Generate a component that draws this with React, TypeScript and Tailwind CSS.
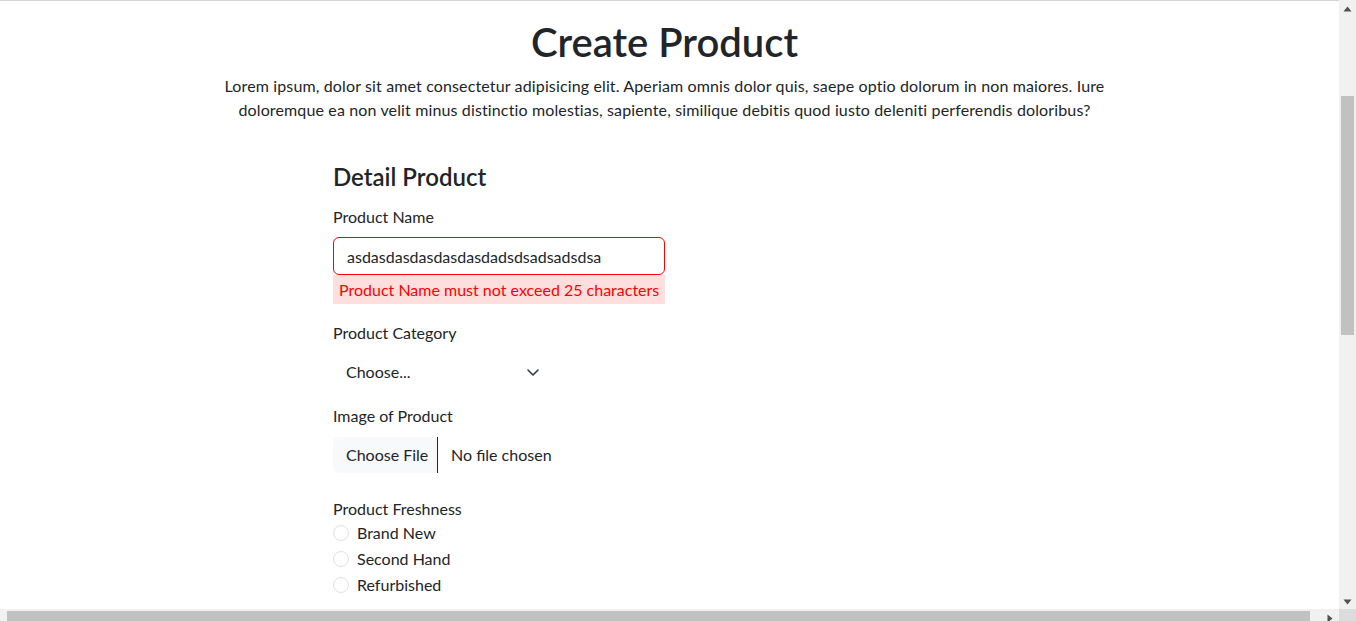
import React from 'react';

const freshness = ['Brand New', 'Second Hand', 'Refurbished'];

function Radio({ label }: { label: string }) {
  return (
    <label className="flex items-center h-[24px] mb-[2px]">
      <span className="w-[16px] h-[16px] rounded-full border border-[#dee2e6] bg-white" />
      <span className="ml-[8px]">{label}</span>
    </label>
  );
}

function Scrollbars() {
  return (
    <>
      {/* vertical */}
      <div className="absolute top-0 right-0 w-[17px] h-[609px] bg-[#f1f1f1]">
        <svg className="absolute left-[4px] top-[6px]" width="9" height="6" viewBox="0 0 9 6">
          <path d="M4.5 0.5L8.5 5.5H0.5Z" fill="#505050" />
        </svg>
        <div className="absolute left-[2px] top-[96px] w-[13px] h-[239px] bg-[#c1c1c1]" />
        <svg className="absolute left-[4px] bottom-[4px]" width="9" height="6" viewBox="0 0 9 6">
          <path d="M4.5 5.5L8.5 0.5H0.5Z" fill="#505050" />
        </svg>
      </div>
      {/* horizontal */}
      <div className="absolute left-0 bottom-0 w-[1339px] h-[12px] bg-[#f1f1f1]">
        <div className="absolute left-[7px] top-[2px] w-[1303px] h-[10px] bg-[#c1c1c1]" />
        <svg className="absolute left-[1327px] top-[5px]" width="6" height="9" viewBox="0 0 6 9">
          <path d="M0.5 0.5L5.5 4.5L0.5 8.5Z" fill="#505050" />
        </svg>
      </div>
      <div className="absolute right-0 bottom-0 w-[17px] h-[12px] bg-[#dcdcdc]" />
    </>
  );
}

export default function App() {
  return (
    <div
      className="relative h-[621px] w-[1356px] overflow-hidden bg-white text-[#212529]"
      style={{ fontFamily: 'Lato, "Liberation Sans", sans-serif' }}
    >
      <div className="w-[1339px]">
        <div className="h-px bg-[#d4d4d4]" />

        <div className="w-[1329px] text-center">
          <h1 className="mt-[17px] text-[40px] leading-[48px] font-semibold">Create Product</h1>
          <p className="mx-auto mt-[8px] w-[900px] text-[16px] leading-[24px] tracking-[0.135px]">
            Lorem ipsum, dolor sit amet consectetur adipisicing elit. Aperiam omnis dolor quis, saepe optio dolorum in
            non maiores. Iure doloremque ea non velit minus distinctio molestias, sapiente, similique debitis quod iusto
            deleniti perferendis doloribus?
          </p>
        </div>

        <form className="ml-[333px] mt-[40px] w-[332px] text-[16px] leading-[24px]">
          <h3 className="text-[24px] leading-[29px] font-semibold">Detail Product</h3>

          <div className="mt-[14px]">
            <label className="block">Product Name</label>
            <input
              readOnly
              value="asdasdasdasdasdasdadsdsadsadsdsa"
              className="mt-[8px] block w-full h-[38px] px-[13px] rounded-md border border-[#ff0000] outline-none"
            />
            <div className="pt-[3px] pb-[2px] px-[6px] whitespace-nowrap bg-[#ffdede] text-[#ff0000]">
              Product Name must not exceed 25 characters
            </div>
          </div>

          <div className="mt-[17px]">
            <label className="block">Product Category</label>
            <div className="mt-[8px] flex items-center justify-between w-[221px] h-[38px] pl-[13px] pr-[15px]">
              <span>Choose...</span>
              <svg width="12" height="7" viewBox="0 0 12 7" fill="none">
                <path d="M1 1l5 5 5-5" stroke="#343a40" strokeWidth="1.6" strokeLinecap="round" strokeLinejoin="round" />
              </svg>
            </div>
          </div>

          <div className="mt-[13px]">
            <label className="block">Image of Product</label>
            <div className="mt-[9px] flex items-center h-[36px]">
              <span className="flex items-center h-full w-[105px] pl-[13px] bg-[#f8f9fa] rounded-l-md border-r border-[#212529]">
                Choose File
              </span>
              <span className="ml-[13px]">No file chosen</span>
            </div>
          </div>

          <div className="mt-[24px]">
            <label className="block">Product Freshness</label>
            {freshness.map(f => (
              <Radio key={f} label={f} />
            ))}
          </div>
        </form>
      </div>

      <Scrollbars />
    </div>
  );
}
